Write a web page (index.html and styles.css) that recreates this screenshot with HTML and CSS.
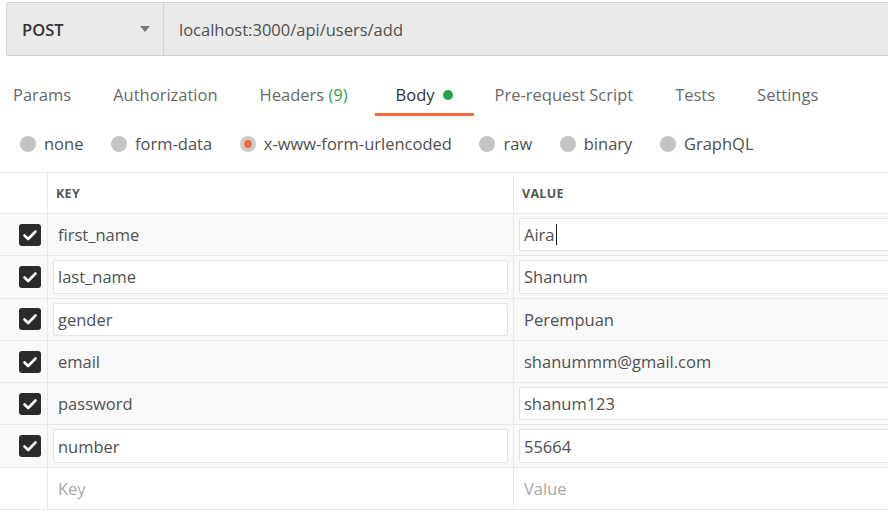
FILE: index.html
```html
<!DOCTYPE html>
<html>
<head>
<meta charset="utf-8">
<link rel="stylesheet" href="styles.css">
</head>
<body>
<div class="page">
  <div class="urlbar">
    <div class="method"><span>POST</span><span class="caret"></span></div>
    <div class="url">localhost:3000/api/users/add</div>
  </div>

  <div class="tabs">
    <div class="tab first">Params</div>
    <div class="tab">Authorization</div>
    <div class="tab">Headers <span class="count">(9)</span></div>
    <div class="tab active">Body<span class="dot"></span></div>
    <div class="tab">Pre-request Script</div>
    <div class="tab">Tests</div>
    <div class="tab">Settings</div>
  </div>

  <div class="radios">
    <div class="radio"><span class="circle"></span>none</div>
    <div class="radio"><span class="circle"></span>form-data</div>
    <div class="radio"><span class="circle on"></span>x-www-form-urlencoded</div>
    <div class="radio"><span class="circle"></span>raw</div>
    <div class="radio"><span class="circle"></span>binary</div>
    <div class="radio"><span class="circle"></span>GraphQL</div>
  </div>

  <div class="table">
    <div class="row head">
      <div class="c-check"></div>
      <div class="c-key">KEY</div>
      <div class="c-val">VALUE</div>
    </div>

    <div class="row filled">
      <div class="c-check"><span class="cb"><svg viewBox="0 0 22 22"><path d="M5.5 11.5 L9.2 15 L16.5 7.5" /></svg></span></div>
      <div class="c-key"><div class="box">first_name</div></div>
      <div class="c-val"><div class="box input">Aira<span class="cursor"></span></div></div>
    </div>
    <div class="row filled">
      <div class="c-check"><span class="cb"><svg viewBox="0 0 22 22"><path d="M5.5 11.5 L9.2 15 L16.5 7.5" /></svg></span></div>
      <div class="c-key"><div class="box input">last_name</div></div>
      <div class="c-val"><div class="box input">Shanum</div></div>
    </div>
    <div class="row filled">
      <div class="c-check"><span class="cb"><svg viewBox="0 0 22 22"><path d="M5.5 11.5 L9.2 15 L16.5 7.5" /></svg></span></div>
      <div class="c-key"><div class="box input">gender</div></div>
      <div class="c-val"><div class="box">Perempuan</div></div>
    </div>
    <div class="row filled">
      <div class="c-check"><span class="cb"><svg viewBox="0 0 22 22"><path d="M5.5 11.5 L9.2 15 L16.5 7.5" /></svg></span></div>
      <div class="c-key"><div class="box">email</div></div>
      <div class="c-val"><div class="box">shanummm@gmail.com</div></div>
    </div>
    <div class="row filled">
      <div class="c-check"><span class="cb"><svg viewBox="0 0 22 22"><path d="M5.5 11.5 L9.2 15 L16.5 7.5" /></svg></span></div>
      <div class="c-key"><div class="box">password</div></div>
      <div class="c-val"><div class="box input">shanum123</div></div>
    </div>
    <div class="row filled">
      <div class="c-check"><span class="cb"><svg viewBox="0 0 22 22"><path d="M5.5 11.5 L9.2 15 L16.5 7.5" /></svg></span></div>
      <div class="c-key"><div class="box input">number</div></div>
      <div class="c-val"><div class="box input">55664</div></div>
    </div>
    <div class="row">
      <div class="c-check"></div>
      <div class="c-key"><div class="box ph">Key</div></div>
      <div class="c-val"><div class="box ph">Value</div></div>
    </div>
  </div>
</div>
</body>
</html>
```

FILE: styles.css
```css
html, body {
  margin: 0;
  padding: 0;
  background: #ffffff;
  overflow: hidden;
}
body {
  font-family: "Open Sans", "Noto Sans", sans-serif;
  font-size: 16.5px;
  color: #505050;
}
.page {
  width: 1000px;
}

/* URL bar */
.urlbar {
  display: flex;
  margin: 2px 0 0 6px;
  height: 52px;
  background: #eaeaea;
  border: 1px solid #d2d2d2;
  border-right: none;
  border-radius: 3px 0 0 3px;
}
.method {
  width: 157px;
  box-sizing: border-box;
  display: flex;
  align-items: center;
  justify-content: space-between;
  padding: 0 13px 0 15px;
  border-right: 1px solid #d4d4d4;
  font-weight: 600;
  color: #333;
}
.caret {
  width: 0;
  height: 0;
  border-left: 5px solid transparent;
  border-right: 5px solid transparent;
  border-top: 6px solid #777;
}
.url {
  display: flex;
  align-items: center;
  padding-left: 15px;
  color: #505050;
}

/* Tabs */
.tabs {
  display: flex;
  margin-top: 20px;
  padding-left: 13px;
}
.tab {
  padding: 8px 21px 7px;
  line-height: 22px;
  border-bottom: 3px solid transparent;
  color: #6a6a6a;
  white-space: nowrap;
}
.tab.first {
  padding-left: 0;
}
.tab .count {
  color: #2e9e4f;
  margin-right: 6px;
}
.tab.active {
  color: #333;
  border-bottom-color: #f26b3a;
}
.dot {
  display: inline-block;
  width: 10px;
  height: 10px;
  border-radius: 50%;
  background: #27a24a;
  margin-left: 8px;
  vertical-align: 1px;
}

/* Radios */
.radios {
  display: flex;
  gap: 27.6px;
  margin-top: 17px;
  padding-left: 20px;
  line-height: 22px;
}
.radio {
  display: flex;
  align-items: center;
  color: #505050;
}
.circle {
  width: 16px;
  height: 16px;
  border-radius: 50%;
  background: #c4c4c4;
  margin-right: 8px;
  box-sizing: border-box;
}
.circle.on {
  background: #f26b3a;
  border: 4px solid #cbcbcb;
}

/* Table */
.table {
  margin-top: 17px;
  border-top: 1px solid #e8e8e8;
}
.row {
  display: flex;
  height: 42.3px;
  box-sizing: border-box;
  border-bottom: 1px solid #e8e8e8;
}
.row.head {
  height: 41px;
}
.row.filled {
  background: #f9f9f9;
}
.c-check {
  width: 48px;
  flex: none;
  box-sizing: border-box;
  border-right: 1px solid #e8e8e8;
  display: flex;
  align-items: center;
  justify-content: flex-end;
  padding-right: 6px;
}
.c-key {
  width: 466px;
  flex: none;
  box-sizing: border-box;
  border-right: 1px solid #e8e8e8;
  padding: 4px 5px;
}
.c-val {
  flex: 1;
  box-sizing: border-box;
  padding: 4px 5px 4px 5px;
}
.head .c-key, .head .c-val {
  display: flex;
  align-items: center;
  padding: 0 8px;
  font-size: 12.5px;
  font-weight: 700;
  color: #555;
  letter-spacing: 0.3px;
}
.box {
  height: 100%;
  box-sizing: border-box;
  border: 1px solid transparent;
  padding: 0 4px;
  display: flex;
  align-items: center;
  border-radius: 2px;
  white-space: nowrap;
}
.box.input {
  background: #ffffff;
  border-color: #e4e4e4;
}
.box.ph {
  color: #a8a8a8;
}
.cursor {
  display: inline-block;
  width: 1px;
  height: 21px;
  background: #222;
  margin-left: 1px;
}
.cb {
  width: 22px;
  height: 22px;
  border-radius: 3px;
  background: #2a2a2a;
  display: flex;
}
.cb svg {
  width: 22px;
  height: 22px;
}
.cb path {
  fill: none;
  stroke: #ffffff;
  stroke-width: 2.6;
  stroke-linecap: round;
  stroke-linejoin: round;
}
```
